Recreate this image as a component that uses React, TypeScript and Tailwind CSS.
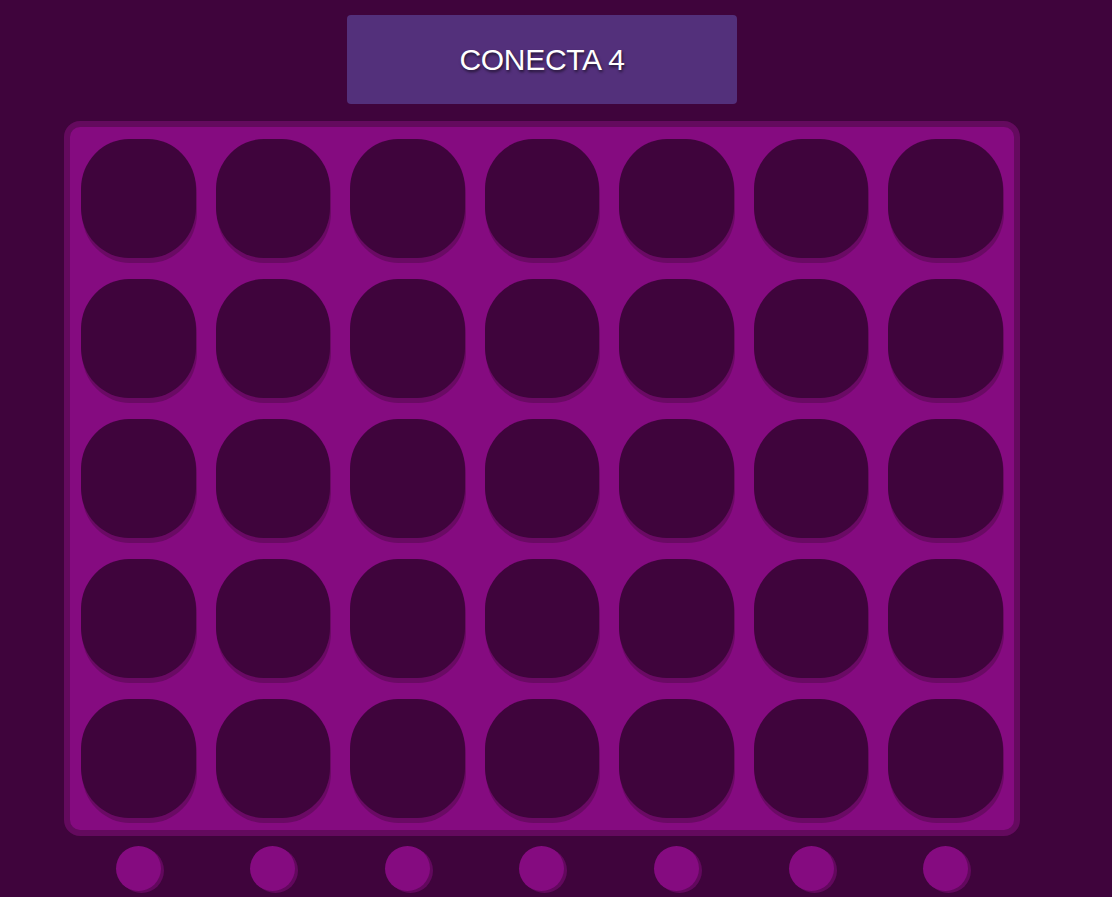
import React from 'react';

const ROWS = 5;
const COLS = 7;

export default function App() {
  const cells = Array.from({ length: ROWS * COLS });
  const cols = Array.from({ length: COLS });

  return (
    <div className="min-h-[897px] w-full bg-[#3f043c]" style={{ fontFamily: '"Liberation Sans", Arial, sans-serif' }}>
      <div className="flex w-[1084px] flex-col items-center pt-[15px]">
        <div className="flex h-[89px] w-[390px] items-center justify-center rounded-[4px] bg-[#53307b]">
          <h1 className="text-[30px] tracking-[-0.3px] text-white [text-shadow:1px_2px_3px_rgba(0,0,0,0.6)]">CONECTA 4</h1>
        </div>

        <div className="mt-[17px] w-[956px] rounded-[16px] border-[6px] border-[#640a5e] bg-[#850b80] pb-[12px] pl-[11px] pr-[11px] pt-[12px]">
          <div className="grid grid-cols-7 gap-x-[20px] gap-y-[21px]">
            {cells.map((_, i) => (
              <div
                key={i}
                className="h-[119px] rounded-[42%] bg-[#3f043c] shadow-[1px_5px_0_#6a0a64]"
              />
            ))}
          </div>
        </div>

        <div className="mt-[10px] grid w-[956px] grid-cols-7 gap-x-[20px] pl-[17px] pr-[17px]">
          {cols.map((_, i) => (
            <div key={i} className="flex justify-center">
              <button className="h-[45px] w-[45px] rounded-full bg-[#850b80] shadow-[3px_2px_0_#62085d]" />
            </div>
          ))}
        </div>
      </div>
    </div>
  );
}
